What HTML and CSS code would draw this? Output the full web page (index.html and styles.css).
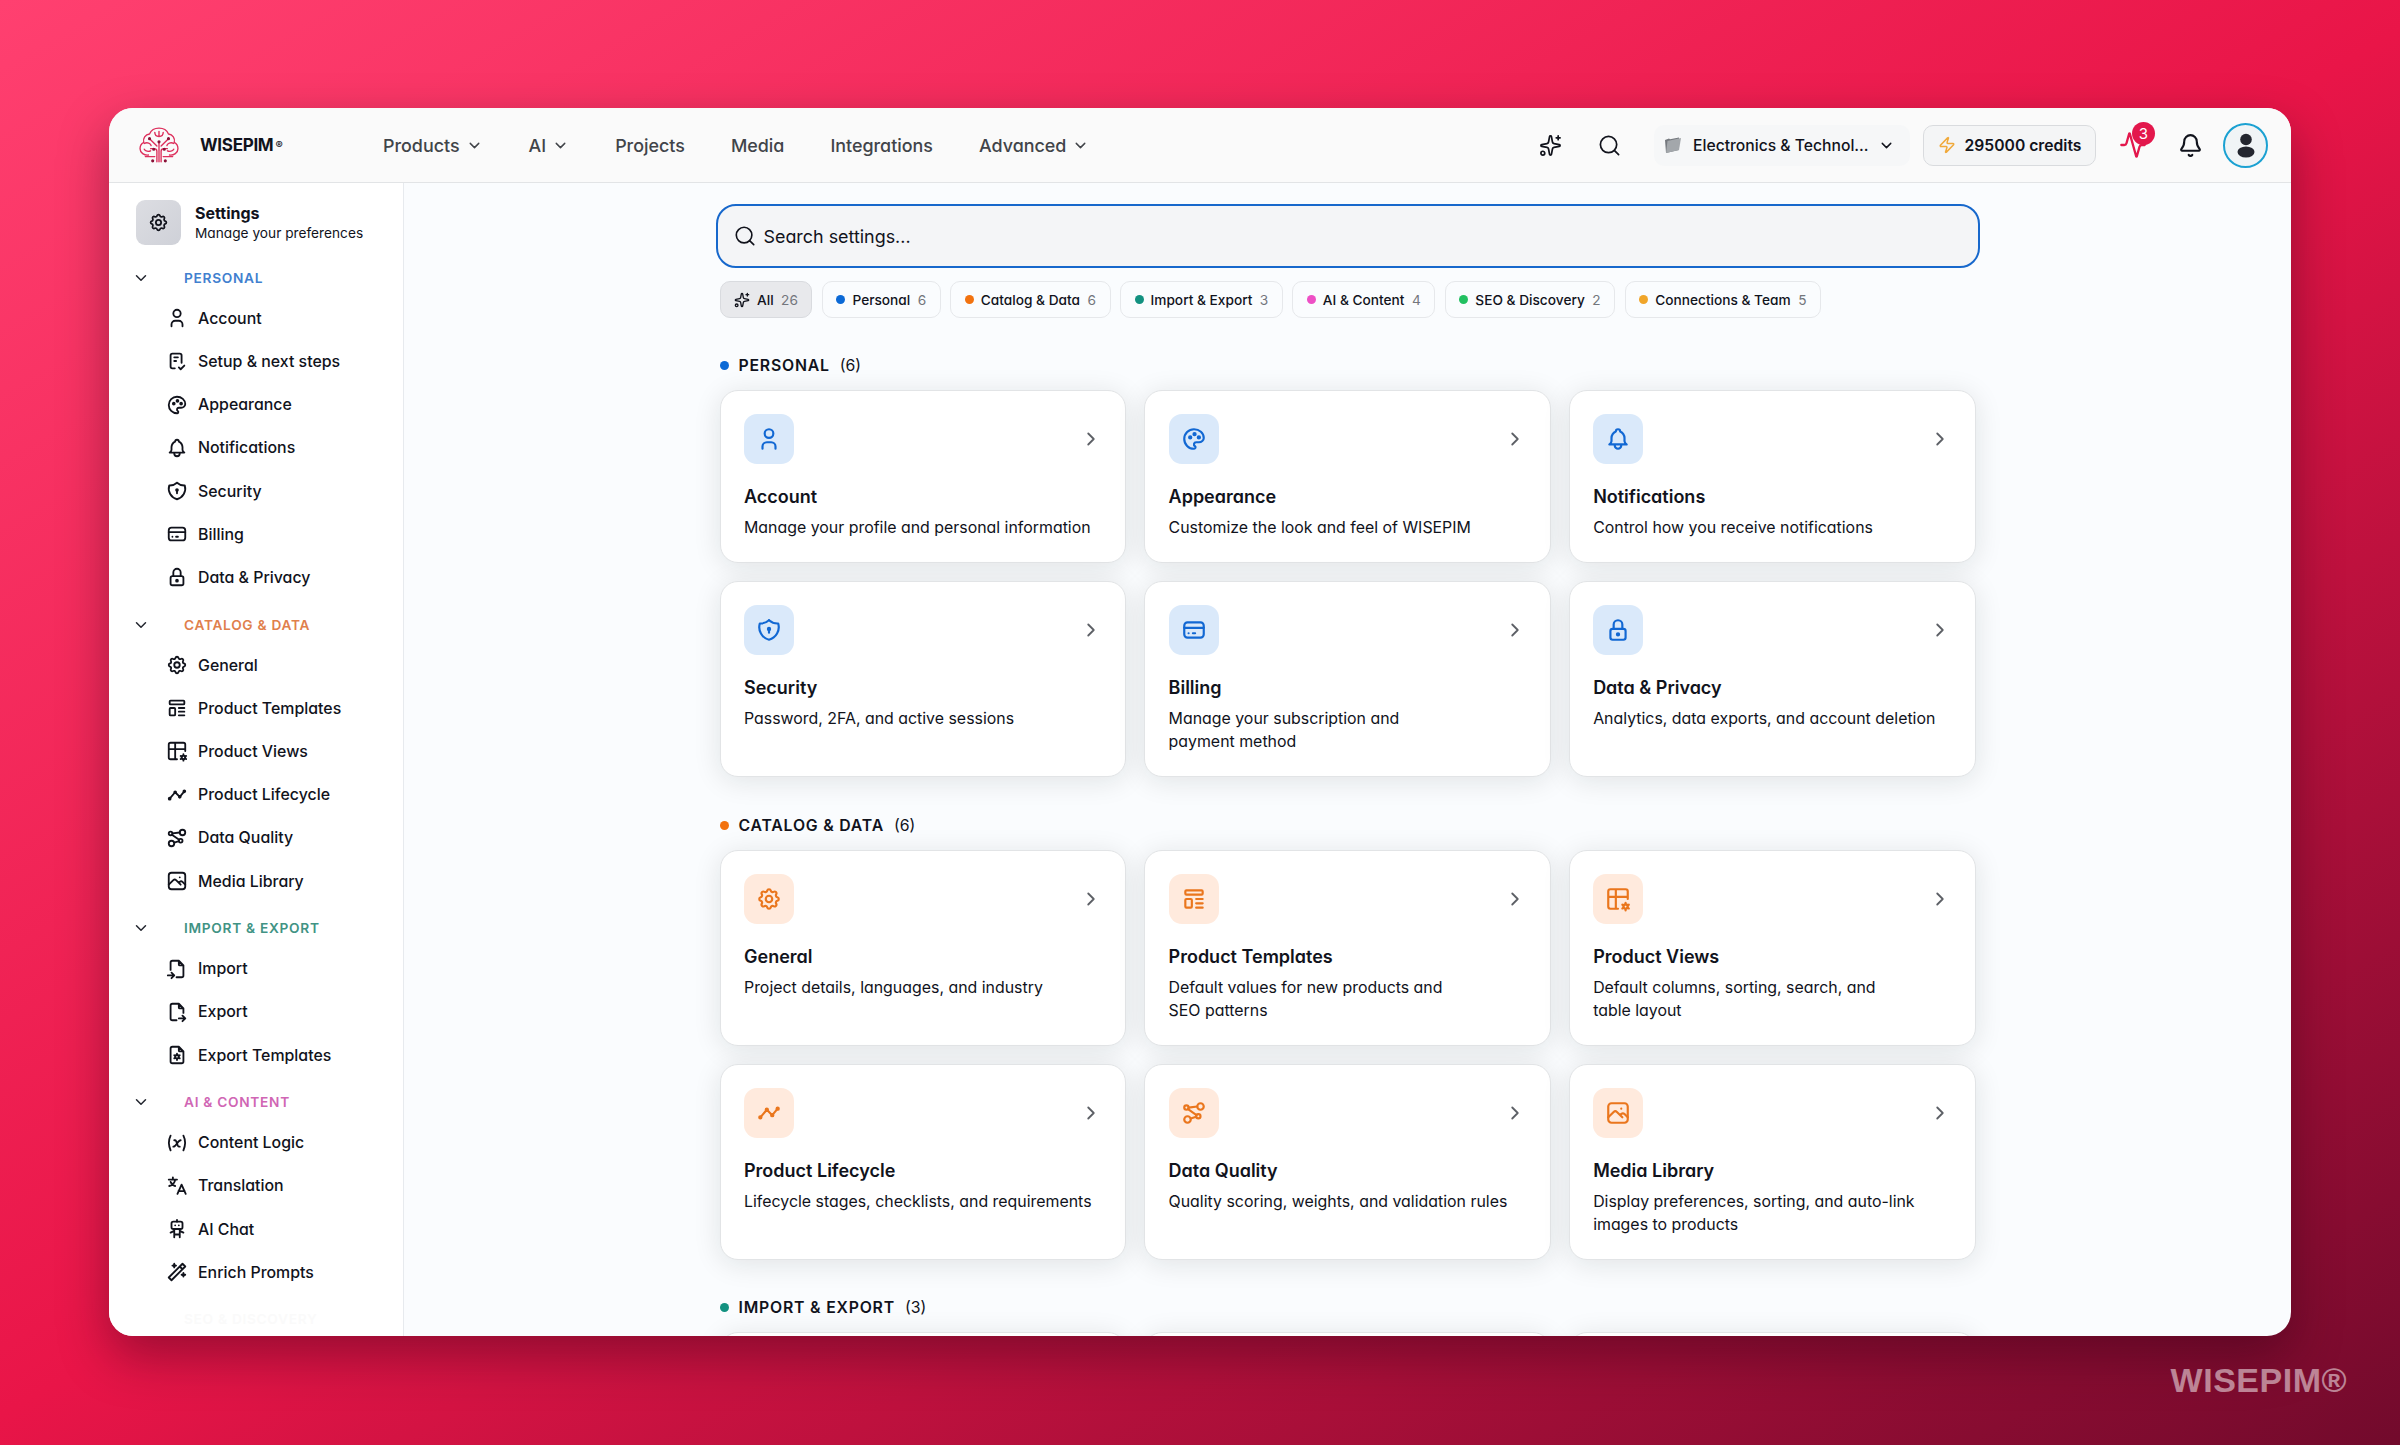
FILE: index.html
```html
<!DOCTYPE html>
<html lang="en">
<head>
  <meta charset="UTF-8">
  <meta name="viewport" content="width=device-width, initial-scale=1.0">
  <title>Settings - WISEPIM</title>
  <link rel="stylesheet" href="styles.css">
</head>
<body>
  <!-- icon sprite -->
  <svg class="sprite" xmlns="http://www.w3.org/2000/svg">
    <symbol id="down" viewBox="0 0 24 24"><path d="M6 9l6 6l6 -6"/></symbol>
    <symbol id="right" viewBox="0 0 24 24"><path d="M9 6l6 6l-6 6"/></symbol>
    <symbol id="search" viewBox="0 0 24 24"><circle cx="11" cy="11" r="8.5"/><path d="M21.5 21.5l-4.5 -4.5"/></symbol>
    <symbol id="sparkles" viewBox="0 0 24 24"><path d="M11.017 2.814a1 1 0 0 1 1.966 0l1.051 5.558a2 2 0 0 0 1.594 1.594l5.558 1.051a1 1 0 0 1 0 1.966l-5.558 1.051a2 2 0 0 0-1.594 1.594l-1.051 5.558a1 1 0 0 1-1.966 0l-1.051-5.558a2 2 0 0 0-1.594-1.594l-5.558-1.051a1 1 0 0 1 0-1.966l5.558-1.051a2 2 0 0 0 1.594-1.594z"/><path d="M20 2v4M22 4h-4"/><circle cx="4" cy="20" r="2"/></symbol>
    <symbol id="user" viewBox="0 0 24 24"><circle cx="12" cy="7" r="4"/><path d="M6 21v-2a4 4 0 0 1 4 -4h4a4 4 0 0 1 4 4v2"/></symbol>
    <symbol id="checklist" viewBox="0 0 24 24"><path d="M9.615 20h-2.615a2 2 0 0 1 -2 -2v-12a2 2 0 0 1 2 -2h8a2 2 0 0 1 2 2v8M14 19l2 2l4 -4M9 8h4M9 12h2"/></symbol>
    <symbol id="palette" viewBox="0 0 24 24"><path d="M12 21a9 9 0 0 1 0 -18c4.97 0 9 3.582 9 8c0 1.06 -.474 2.078 -1.318 2.828c-.844 .75 -1.989 1.172 -3.182 1.172h-2.5a2 2 0 0 0 -1 3.75a1.3 1.3 0 0 1 -1 2.25"/><circle cx="8.5" cy="10.5" r="1"/><circle cx="12.5" cy="7.5" r="1"/><circle cx="16.5" cy="10.5" r="1"/></symbol>
    <symbol id="bell" viewBox="0 0 24 24"><path d="M10 5a2 2 0 1 1 4 0a7 7 0 0 1 4 6v3a4 4 0 0 0 2 3h-16a4 4 0 0 0 2 -3v-3a7 7 0 0 1 4 -6M9 17v1a3 3 0 0 0 6 0v-1"/></symbol>
    <symbol id="shield" viewBox="0 0 24 24"><path d="M12 3a12 12 0 0 0 8.5 3a12 12 0 0 1 -8.5 15a12 12 0 0 1 -8.5 -15a12 12 0 0 0 8.5 -3"/><circle cx="12" cy="11" r="1"/><path d="M12 12v2.5"/></symbol>
    <symbol id="card" viewBox="0 0 24 24"><rect x="3" y="5" width="18" height="14" rx="3"/><path d="M3 10h18M7 15h.01M11 15h2"/></symbol>
    <symbol id="lock" viewBox="0 0 24 24"><rect x="5" y="11" width="14" height="10" rx="2"/><circle cx="12" cy="16" r="1"/><path d="M8 11v-4a4 4 0 1 1 8 0v4"/></symbol>
    <symbol id="gear" viewBox="0 0 24 24"><path d="M10.325 4.317c.426 -1.756 2.924 -1.756 3.35 0a1.724 1.724 0 0 0 2.573 1.066c1.543 -.94 3.31 .826 2.37 2.37a1.724 1.724 0 0 0 1.065 2.572c1.756 .426 1.756 2.924 0 3.35a1.724 1.724 0 0 0 -1.066 2.573c.94 1.543 -.826 3.31 -2.37 2.37a1.724 1.724 0 0 0 -2.572 1.065c-.426 1.756 -2.924 1.756 -3.35 0a1.724 1.724 0 0 0 -2.573 -1.066c-1.543 .94 -3.31 -.826 -2.37 -2.37a1.724 1.724 0 0 0 -1.065 -2.572c-1.756 -.426 -1.756 -2.924 0 -3.35a1.724 1.724 0 0 0 1.066 -2.573c-.94 -1.543 .826 -3.31 2.37 -2.37c1 .608 2.296 .07 2.572 -1.065"/><circle cx="12" cy="12" r="3"/></symbol>
    <symbol id="template" viewBox="0 0 24 24"><rect x="4" y="4" width="16" height="4" rx="1"/><rect x="4" y="12" width="6" height="8" rx="1"/><path d="M14 12h6M14 16h6M14 20h6"/></symbol>
    <symbol id="views" viewBox="0 0 24 24"><path d="M12 21h-7a2 2 0 0 1 -2 -2v-14a2 2 0 0 1 2 -2h14a2 2 0 0 1 2 2v7M3 10h18M10 3v18"/><circle cx="19" cy="19" r="2"/><path d="M19 15.5v1.5M19 21v1.5M22 17.3l-1.3 .7M17.3 20l-1.3 .7M16 17.3l1.3 .7M20.7 20l1.3 .7"/></symbol>
    <symbol id="timeline" viewBox="0 0 24 24"><path d="M4 16l6 -7l5 5l5 -6"/><circle cx="15" cy="14" r="1"/><circle cx="10" cy="9" r="1"/><circle cx="4" cy="16" r="1"/><circle cx="20" cy="8" r="1"/></symbol>
    <symbol id="dots" viewBox="0 0 24 24"><circle cx="5" cy="7" r="2"/><circle cx="16" cy="15" r="2"/><circle cx="18" cy="6" r="3"/><circle cx="6" cy="18" r="3"/><path d="M9 17l5 -1.5M6.5 8.5l7.81 5.37M7 7l8 -1"/></symbol>
    <symbol id="photo" viewBox="0 0 24 24"><path d="M15 8h.01M3 16l5 -5c.928 -.893 2.072 -.893 3 0l5 5M14 14l1 -1c.928 -.893 2.072 -.893 3 0l3 3"/><rect x="3" y="3" width="18" height="18" rx="3"/></symbol>
    <symbol id="import" viewBox="0 0 24 24"><path d="M14 3v4a1 1 0 0 0 1 1h4M5 13v-8a2 2 0 0 1 2 -2h7l5 5v11a2 2 0 0 1 -2 2h-5.5M2 19h7m-3 -3l3 3l-3 3"/></symbol>
    <symbol id="export" viewBox="0 0 24 24"><path d="M14 3v4a1 1 0 0 0 1 1h4M11.5 21h-4.5a2 2 0 0 1 -2 -2v-14a2 2 0 0 1 2 -2h7l5 5v5m-5 6h7m-3 -3l3 3l-3 3"/></symbol>
    <symbol id="filegear" viewBox="0 0 24 24"><path d="M14 3v4a1 1 0 0 0 1 1h4M17 21h-10a2 2 0 0 1 -2 -2v-14a2 2 0 0 1 2 -2h7l5 5v11a2 2 0 0 1 -2 2"/><circle cx="12" cy="14" r="2"/><path d="M12 10.5v1.5M12 16v1.5M15 12.3l-1.3 .7M10.3 15l-1.3 .7M9 12.3l1.3 .7M13.7 15l1.3 .7"/></symbol>
    <symbol id="variable" viewBox="0 0 24 24"><path d="M5 4c-2.5 5 -2.5 10 0 16m14 -16c2.5 5 2.5 10 0 16m-10 -11h1c1 0 1 1 2.016 3.527c.984 2.473 .984 3.473 1.984 3.473h1M8 16c1.5 0 3 -2 4 -3.5s2.5 -3.5 4 -3.5"/></symbol>
    <symbol id="lang" viewBox="0 0 24 24"><path d="M3 5h9M7.5 2.5v2.5M10 5c-.5 3.5 -2.8 6 -6.5 7M5 7.5c1 2.3 3 4 5 4.5M12.5 20.5l4.5 -10l4.5 10M20.5 17.5h-7"/></symbol>
    <symbol id="robot" viewBox="0 0 24 24"><rect x="6" y="4" width="12" height="8" rx="2"/><path d="M12 2v2M9 12v9M15 12v9M5 16l4 -2M15 14l4 2M9 18h6M10 8v.01M14 8v.01"/></symbol>
    <symbol id="wand" viewBox="0 0 24 24"><path d="M6 21l15 -15l-3 -3l-15 15l3 3M15 6l3 3M9 3a2 2 0 0 0 2 2a2 2 0 0 0 -2 2a2 2 0 0 0 -2 -2a2 2 0 0 0 2 -2M19 13a2 2 0 0 0 2 2a2 2 0 0 0 -2 2a2 2 0 0 0 -2 -2a2 2 0 0 0 2 -2"/></symbol>
    <symbol id="zap" viewBox="0 0 24 24"><path d="M4 14a1 1 0 0 1-.78-1.63l9.9-10.2a.5.5 0 0 1 .86.46l-1.92 6.02A1 1 0 0 0 13 10h7a1 1 0 0 1 .78 1.63l-9.9 10.2a.5.5 0 0 1-.86-.46l1.92-6.02A1 1 0 0 0 11 14z"/></symbol>
    <symbol id="activity" viewBox="0 0 24 24"><path d="M22 12h-2.48a2 2 0 0 0-1.93 1.46l-2.35 8.36a.25.25 0 0 1-.48 0L9.24 2.18a.25.25 0 0 0-.48 0l-2.35 8.36A2 2 0 0 1 4.49 12H2"/></symbol>
    <symbol id="alarm" viewBox="0 0 24 24"><path d="M10.268 21a2 2 0 0 0 3.464 0M3.262 15.326A1 1 0 0 0 4 17h16a1 1 0 0 0 .74-1.673C19.41 13.956 18 12.499 18 8A6 6 0 0 0 6 8c0 4.499-1.411 5.956-2.738 7.326"/></symbol>
  </svg>

  <div class="window">
    <header class="topbar">
      <svg class="logo" viewBox="0 0 38 34">
        <path d="M15 28h-9M23 28h9M9 26.5c-4 .5 -8 -2 -8 -6c0 -3 1.5 -5 3.5 -6c-1 -4 1.5 -7.5 5.5 -8c1.5 -3.5 5 -5.5 9 -5.5s7.5 2 9 5.5c4 .5 6.5 4 5.5 8c2 1 3.5 3 3.5 6c0 4 -4 6.5 -8 6"/>
        <path d="M17 33v-10c0 -2 -1 -2.5 -3 -2.5h-3M21 33v-10c0 -2 1 -2.5 3 -2.5h3M19 33v-18M17 18l-7 -7M21 18l7 -7M5 15.5c3 -1.5 6 0 6.5 2M33 15.5c-3 -1.5 -6 0 -6.5 2M5 21c1 2 4 2.5 6 1.5M33 21c-1 2 -4 2.5 -6 1.5M15 5c0 3 1 4 4 4s4 -1 4 -4M19 4v5"/>
        <path class="logo-dots" d="M10 11v.01M28 11v.01M19 14v.01M14 21v.01M24 21v.01M13 32v.01M25 32v.01"/>
      </svg>
      <div class="brand">WISEPIM<span>®</span></div>
      <nav class="nav">
        <a>Products<svg class="icon"><use href="#down"/></svg></a>
        <a>AI<svg class="icon"><use href="#down"/></svg></a>
        <a>Projects</a>
        <a>Media</a>
        <a>Integrations</a>
        <a>Advanced<svg class="icon"><use href="#down"/></svg></a>
      </nav>
      <div class="tools">
        <svg class="icon tool-sparkle"><use href="#sparkles"/></svg>
        <svg class="icon tool-search"><use href="#search"/></svg>
        <div class="project">
          <svg class="folder" viewBox="0 0 18 18">
            <path d="M1 4l4 -1.5l1 .8l9 -1.8v12.5l-13 3z" fill="#75797e"/>
            <path d="M3.5 5l13.5 -3l-2 12l-13 3z" fill="#a3a7ab"/>
          </svg>
          <span>Electronics &amp; Technol...</span>
          <svg class="icon"><use href="#down"/></svg>
        </div>
        <div class="credits"><svg class="icon"><use href="#zap"/></svg>295000 credits</div>
        <div class="pulse"><svg class="icon"><use href="#activity"/></svg><span class="badge">3</span></div>
        <svg class="icon tool-bell"><use href="#alarm"/></svg>
        <div class="avatar"><svg viewBox="0 0 24 24"><circle cx="12" cy="6" r="5.8"/><ellipse cx="12" cy="18.5" rx="8.5" ry="5.5"/></svg></div>
      </div>
    </header>

    <div class="body">
      <aside class="sidebar">
        <div class="side-head">
          <div class="side-badge"><svg class="icon"><use href="#gear"/></svg></div>
          <div>
            <div class="side-title">Settings</div>
            <div class="side-sub">Manage your preferences</div>
          </div>
        </div>

        <div class="group personal"><svg class="icon"><use href="#down"/></svg>PERSONAL</div>
        <a class="item"><svg class="icon"><use href="#user"/></svg>Account</a>
        <a class="item"><svg class="icon"><use href="#checklist"/></svg>Setup &amp; next steps</a>
        <a class="item"><svg class="icon"><use href="#palette"/></svg>Appearance</a>
        <a class="item"><svg class="icon"><use href="#bell"/></svg>Notifications</a>
        <a class="item"><svg class="icon"><use href="#shield"/></svg>Security</a>
        <a class="item"><svg class="icon"><use href="#card"/></svg>Billing</a>
        <a class="item"><svg class="icon"><use href="#lock"/></svg>Data &amp; Privacy</a>

        <div class="group catalog"><svg class="icon"><use href="#down"/></svg>CATALOG &amp; DATA</div>
        <a class="item"><svg class="icon"><use href="#gear"/></svg>General</a>
        <a class="item"><svg class="icon"><use href="#template"/></svg>Product Templates</a>
        <a class="item"><svg class="icon"><use href="#views"/></svg>Product Views</a>
        <a class="item"><svg class="icon"><use href="#timeline"/></svg>Product Lifecycle</a>
        <a class="item"><svg class="icon"><use href="#dots"/></svg>Data Quality</a>
        <a class="item"><svg class="icon"><use href="#photo"/></svg>Media Library</a>

        <div class="group import"><svg class="icon"><use href="#down"/></svg>IMPORT &amp; EXPORT</div>
        <a class="item"><svg class="icon"><use href="#import"/></svg>Import</a>
        <a class="item"><svg class="icon"><use href="#export"/></svg>Export</a>
        <a class="item"><svg class="icon"><use href="#filegear"/></svg>Export Templates</a>

        <div class="group ai"><svg class="icon"><use href="#down"/></svg>AI &amp; CONTENT</div>
        <a class="item"><svg class="icon"><use href="#variable"/></svg>Content Logic</a>
        <a class="item"><svg class="icon"><use href="#lang"/></svg>Translation</a>
        <a class="item"><svg class="icon"><use href="#robot"/></svg>AI Chat</a>
        <a class="item"><svg class="icon"><use href="#wand"/></svg>Enrich Prompts</a>

        <!-- next group, almost faded out at the bottom edge -->
        <div class="group faded">SEO &amp; DISCOVERY</div>
      </aside>

      <main class="main">
        <div class="content">
          <div class="search"><svg class="icon"><use href="#search"/></svg>Search settings...</div>

          <div class="chips">
            <span class="chip active"><svg class="icon"><use href="#sparkles"/></svg>All <em>26</em></span>
            <span class="chip"><i class="dot blue"></i>Personal <em>6</em></span>
            <span class="chip"><i class="dot orange"></i>Catalog &amp; Data <em>6</em></span>
            <span class="chip"><i class="dot teal"></i>Import &amp; Export <em>3</em></span>
            <span class="chip"><i class="dot pink"></i>AI &amp; Content <em>4</em></span>
            <span class="chip"><i class="dot green"></i>SEO &amp; Discovery <em>2</em></span>
            <span class="chip"><i class="dot amber"></i>Connections &amp; Team <em>5</em></span>
          </div>

          <h2 class="heading"><i class="dot blue"></i>PERSONAL <span>(6)</span></h2>
          <div class="grid grid-blue">
            <div class="card">
              <div class="card-top"><div class="tile"><svg class="icon"><use href="#user"/></svg></div><svg class="icon arrow"><use href="#right"/></svg></div>
              <h3>Account</h3>
              <p>Manage your profile and personal information</p>
            </div>
            <div class="card">
              <div class="card-top"><div class="tile"><svg class="icon"><use href="#palette"/></svg></div><svg class="icon arrow"><use href="#right"/></svg></div>
              <h3>Appearance</h3>
              <p>Customize the look and feel of WISEPIM</p>
            </div>
            <div class="card">
              <div class="card-top"><div class="tile"><svg class="icon"><use href="#bell"/></svg></div><svg class="icon arrow"><use href="#right"/></svg></div>
              <h3>Notifications</h3>
              <p>Control how you receive notifications</p>
            </div>
            <div class="card">
              <div class="card-top"><div class="tile"><svg class="icon"><use href="#shield"/></svg></div><svg class="icon arrow"><use href="#right"/></svg></div>
              <h3>Security</h3>
              <p>Password, 2FA, and active sessions</p>
            </div>
            <div class="card">
              <div class="card-top"><div class="tile"><svg class="icon"><use href="#card"/></svg></div><svg class="icon arrow"><use href="#right"/></svg></div>
              <h3>Billing</h3>
              <p>Manage your subscription and<br>payment method</p>
            </div>
            <div class="card">
              <div class="card-top"><div class="tile"><svg class="icon"><use href="#lock"/></svg></div><svg class="icon arrow"><use href="#right"/></svg></div>
              <h3>Data &amp; Privacy</h3>
              <p>Analytics, data exports, and account deletion</p>
            </div>
          </div>

          <h2 class="heading"><i class="dot orange"></i>CATALOG &amp; DATA <span>(6)</span></h2>
          <div class="grid grid-orange">
            <div class="card">
              <div class="card-top"><div class="tile"><svg class="icon"><use href="#gear"/></svg></div><svg class="icon arrow"><use href="#right"/></svg></div>
              <h3>General</h3>
              <p>Project details, languages, and industry</p>
            </div>
            <div class="card">
              <div class="card-top"><div class="tile"><svg class="icon"><use href="#template"/></svg></div><svg class="icon arrow"><use href="#right"/></svg></div>
              <h3>Product Templates</h3>
              <p>Default values for new products and<br>SEO patterns</p>
            </div>
            <div class="card">
              <div class="card-top"><div class="tile"><svg class="icon"><use href="#views"/></svg></div><svg class="icon arrow"><use href="#right"/></svg></div>
              <h3>Product Views</h3>
              <p>Default columns, sorting, search, and<br>table layout</p>
            </div>
            <div class="card">
              <div class="card-top"><div class="tile"><svg class="icon"><use href="#timeline"/></svg></div><svg class="icon arrow"><use href="#right"/></svg></div>
              <h3>Product Lifecycle</h3>
              <p>Lifecycle stages, checklists, and requirements</p>
            </div>
            <div class="card">
              <div class="card-top"><div class="tile"><svg class="icon"><use href="#dots"/></svg></div><svg class="icon arrow"><use href="#right"/></svg></div>
              <h3>Data Quality</h3>
              <p>Quality scoring, weights, and validation rules</p>
            </div>
            <div class="card">
              <div class="card-top"><div class="tile"><svg class="icon"><use href="#photo"/></svg></div><svg class="icon arrow"><use href="#right"/></svg></div>
              <h3>Media Library</h3>
              <p>Display preferences, sorting, and auto-link<br>images to products</p>
            </div>
          </div>

          <h2 class="heading"><i class="dot teal"></i>IMPORT &amp; EXPORT <span>(3)</span></h2>
          <div class="grid">
            <div class="card"></div>
            <div class="card"></div>
            <div class="card"></div>
          </div>
        </div>
      </main>
    </div>
  </div>
  <div class="watermark">WISEPIM®</div>
</body>
</html>
```
FILE: styles.css
```css
* {
  box-sizing: border-box;
}
body {
  margin: 0;
  height: 1445px;
  padding: 108px 109px 0;
  overflow: hidden;
  background: linear-gradient(150deg, #ff4070 0%, #e91548 50%, #720a2c 100%);
  font-family: Inter, "Liberation Sans", sans-serif;
  font-feature-settings: "cv11";
  color: #11131c;
}
.sprite {
  display: none;
}
.icon {
  width: 22px;
  height: 22px;
  flex: none;
  fill: none;
  stroke: currentColor;
  stroke-width: 2;
  stroke-linecap: round;
  stroke-linejoin: round;
}
.window {
  height: 1228px;
  border-radius: 24px;
  overflow: hidden;
  background: #fafcfe;
  box-shadow: 0 20px 50px rgba(40, 0, 20, 0.4);
  display: flex;
  flex-direction: column;
}

/* top bar */
.topbar {
  height: 75px;
  flex: none;
  display: flex;
  align-items: center;
  padding: 0 23px 0 30px;
  background: #fafafa;
  border-bottom: 1.5px solid #e2e4e6;
}
.logo {
  width: 40px;
  height: 36px;
  fill: none;
  stroke: #dd2f5c;
  stroke-width: 1.3;
  stroke-linecap: round;
}
.logo-dots {
  stroke: #8a1238;
  stroke-width: 3;
}
.brand {
  width: 183px;
  margin-left: 21px;
  font-size: 17px;
  font-weight: 700;
  letter-spacing: -0.3px;
  display: flex;
  align-items: center;
}
.brand span {
  font-size: 11px;
  margin-left: 2px;
}
.nav {
  display: flex;
  gap: 46px;
  font-size: 17.9px;
  font-weight: 500;
  color: #414449;
}
.nav a {
  display: flex;
  align-items: center;
  gap: 6px;
}
.nav .icon {
  width: 17px;
  height: 17px;
}
.tools {
  margin-left: auto;
  display: flex;
  align-items: center;
}
.tool-sparkle, .tool-search {
  width: 23px;
  height: 23px;
  stroke-width: 1.8;
}
.tool-search {
  margin: 0 33px 0 36px;
}
.project {
  width: 256px;
  height: 41px;
  padding: 0 15px 0 10px;
  border-radius: 10px;
  background: #f6f7f8;
  display: flex;
  align-items: center;
  font-size: 15.7px;
  font-weight: 500;
}
.project .icon {
  width: 17px;
  height: 17px;
  margin-left: auto;
}
.folder {
  width: 18px;
  height: 18px;
  margin-right: 11px;
}
.credits {
  width: 173px;
  height: 41px;
  margin-left: 13px;
  border: 1.5px solid #d9dbde;
  border-radius: 10px;
  background: #f4f5f6;
  display: flex;
  align-items: center;
  justify-content: center;
  gap: 9px;
  font-size: 15.7px;
  font-weight: 600;
}
.credits .icon {
  width: 18px;
  height: 18px;
  color: #f0a93b;
}
.pulse {
  position: relative;
  margin-left: 23px;
  color: #e3174c;
  display: flex;
}
.pulse .icon {
  width: 28px;
  height: 28px;
}
.badge {
  position: absolute;
  left: 13px;
  top: -9px;
  width: 23px;
  height: 23px;
  border-radius: 50%;
  background: #e3174c;
  color: #fff;
  font-size: 15px;
  line-height: 23px;
  text-align: center;
}
.tool-bell {
  width: 25px;
  height: 25px;
  margin: 0 20px 0 31px;
}
.avatar {
  width: 45px;
  height: 45px;
  border: 2px solid #1ba1d2;
  border-radius: 50%;
  background: #f0f4f6;
  display: flex;
  align-items: center;
  justify-content: center;
}
.avatar svg {
  width: 24px;
  height: 25px;
  fill: #23262f;
}

/* sidebar */
.body {
  flex: 1;
  min-height: 0;
  display: flex;
}
.sidebar {
  width: 295px;
  flex: none;
  overflow: hidden;
  background: #fff;
  border-right: 1.5px solid #e7eaee;
  padding: 17px 0 0 23px;
}
.side-head {
  display: flex;
  align-items: center;
  gap: 14px;
  height: 45px;
  margin: 0 0 13.7px 4px;
}
.side-badge {
  width: 45px;
  height: 45px;
  border-radius: 9px;
  background: linear-gradient(135deg, #dcdde2, #cfd1d8);
  display: flex;
  align-items: center;
  justify-content: center;
}
.side-badge .icon {
  width: 21px;
  height: 21px;
}
.side-title {
  font-size: 16px;
  font-weight: 700;
  line-height: 20px;
}
.side-sub {
  font-size: 13.7px;
  line-height: 20px;
}
.group {
  height: 38px;
  display: flex;
  align-items: center;
  font-size: 13.7px;
  font-weight: 600;
  letter-spacing: 0.7px;
}
.item + .group {
  margin-top: 6.5px;
}
.group .icon {
  width: 18px;
  height: 18px;
  margin-right: 34px;
  color: #23262f;
}
.personal { color: #4180cf; }
.catalog { color: #e0804c; }
.import { color: #419384; }
.ai { color: #d066b4; }
.faded {
  padding-left: 52px;
  color: #fafafa;
}
.item {
  height: 43.2px;
  padding-left: 34px;
  display: flex;
  align-items: center;
  gap: 10px;
  font-size: 15.9px;
  font-weight: 500;
}

/* main content */
.main {
  flex: 1;
  display: flex;
  justify-content: center;
  overflow: hidden;
}
.content {
  width: 1256px;
  padding-top: 21px;
}
.search {
  height: 64px;
  margin: 0 -4px;
  padding: 0 16px;
  border: 2px solid #1768cc;
  border-radius: 20px;
  background: #f4f5f7;
  display: flex;
  align-items: center;
  gap: 8px;
  font-size: 17.9px;
}
.search .icon {
  stroke-width: 1.8;
}
.chips {
  display: flex;
  gap: 9.5px;
  margin-top: 13px;
}
.chip {
  height: 37px;
  padding: 0 13.5px;
  border: 1.5px solid #e6e8eb;
  border-radius: 10px;
  display: flex;
  align-items: center;
  font-size: 13.7px;
  font-weight: 500;
}
.chip em {
  font-style: normal;
  font-weight: 400;
  color: #73767c;
  margin-left: 7.5px;
}
.chip .icon {
  width: 16px;
  height: 16px;
  margin-right: 7px;
}
.chip.active {
  background: #e8e9ec;
  border-color: #d9dbdf;
}
.dot {
  width: 9px;
  height: 9px;
  border-radius: 50%;
  margin-right: 7px;
}
.blue { background: #0b69d6; }
.orange { background: #f2720f; }
.teal { background: #129180; }
.pink { background: #ee4fc5; }
.green { background: #22c061; }
.amber { background: #f0a52a; }
.heading {
  height: 20px;
  margin: 37.5px 0 14.5px;
  display: flex;
  align-items: center;
  font-size: 15.8px;
  font-weight: 600;
  letter-spacing: 0.8px;
}
.heading .dot {
  margin-right: 10px;
}
.heading span {
  font-weight: 400;
  letter-spacing: 0;
  margin-left: 10px;
}
.grid {
  display: grid;
  grid-template-columns: repeat(3, 1fr);
  gap: 17.7px;
}
.grid + .heading {
  margin-top: 38px;
}
.card {
  min-height: 100px;
  padding: 23px 23.5px 22.7px;
  border: 1px solid #e2e4e6;
  border-radius: 18px;
  background: #fff;
  box-shadow: 0 4px 28px rgba(20, 25, 30, 0.11);
}
.card-top {
  display: flex;
  justify-content: space-between;
  align-items: center;
}
.tile {
  width: 50px;
  height: 50px;
  border-radius: 13px;
  display: flex;
  align-items: center;
  justify-content: center;
}
.tile .icon {
  width: 26px;
  height: 26px;
}
.grid-blue .tile { background: #dae9fa; color: #1268d3; }
.grid-orange .tile { background: #ffeadd; color: #ea761d; }
.arrow {
  color: #5d6066;
}
.card h3 {
  margin: 20.3px 0 6.8px;
  font-size: 18px;
  line-height: 26px;
  font-weight: 600;
}
.card p {
  margin: 0;
  font-size: 15.9px;
  line-height: 22.7px;
  white-space: nowrap;
}

.watermark {
  margin: 25px -56px 0 0;
  text-align: right;
  font-family: "Liberation Sans", Arial, sans-serif;
  font-size: 34px;
  line-height: 38px;
  font-weight: 700;
  letter-spacing: 0.5px;
  color: rgba(255, 255, 255, 0.5);
}
```
